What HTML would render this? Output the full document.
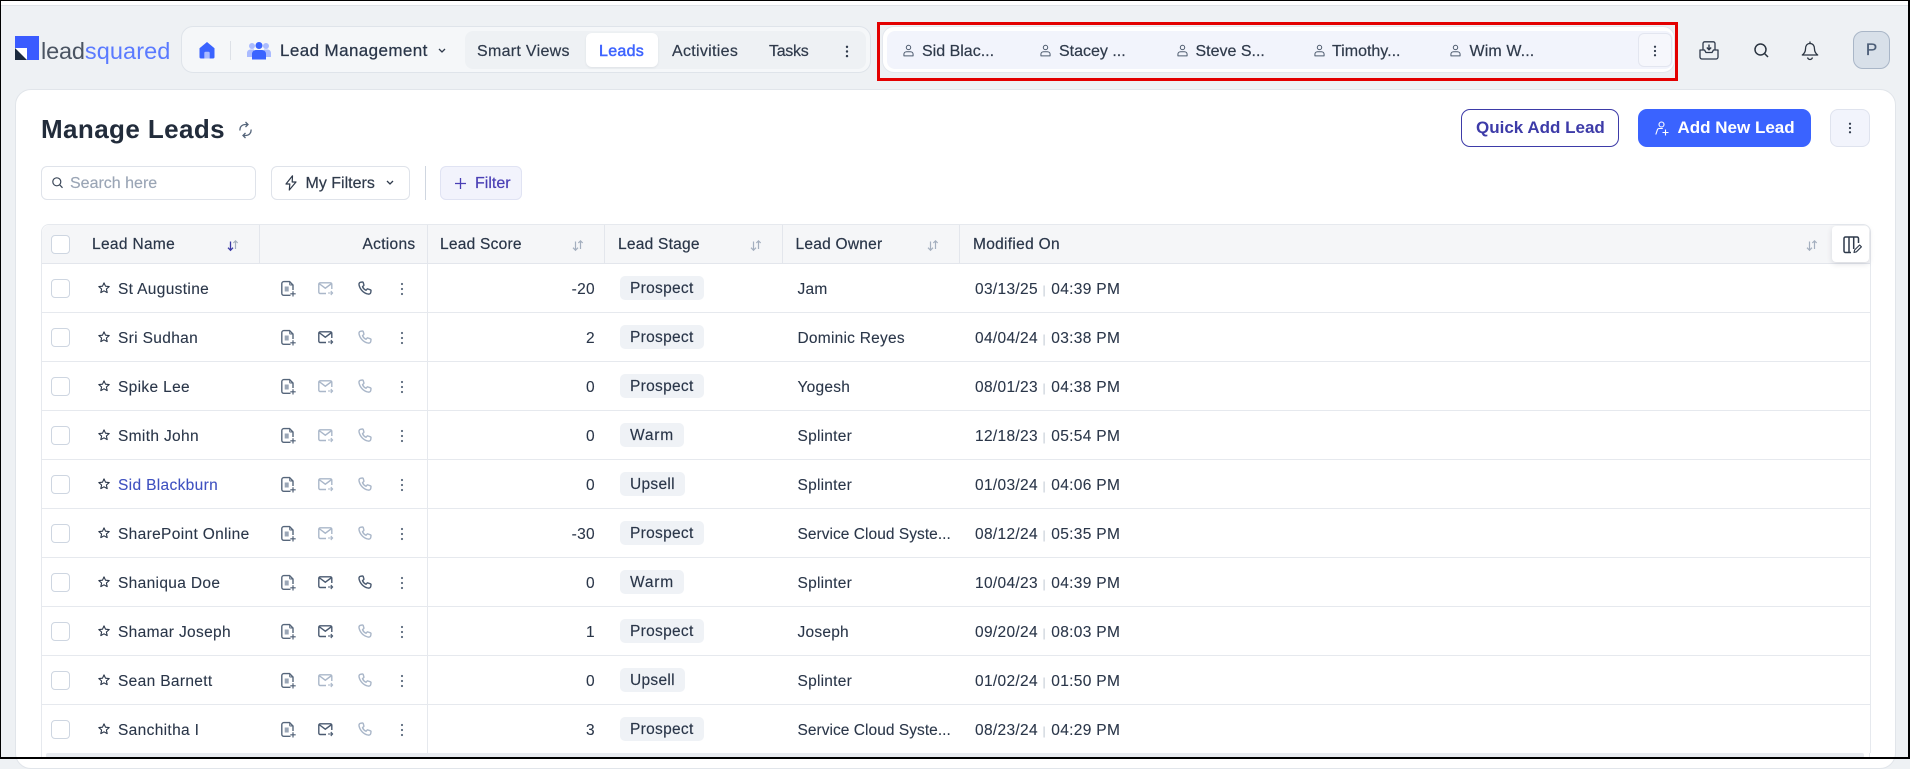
<!DOCTYPE html>
<html><head><meta charset="utf-8"><title>Manage Leads</title>
<style>
*{box-sizing:border-box;margin:0;padding:0}
html,body{width:1910px;height:759px;overflow:hidden;background:#eef1f4;font-family:"Liberation Sans",sans-serif;color:#2a3649}
.a{position:absolute}
.t{position:absolute;white-space:nowrap;line-height:20px;font-size:15.5px;letter-spacing:.34px}
.m{-webkit-text-stroke:.25px currentColor}
.n{font-size:16px;letter-spacing:.3px;-webkit-text-stroke:.2px currentColor;color:#2f3a4b}
.h{top:235px;letter-spacing:.25px;-webkit-text-stroke:.2px currentColor}
.vl{position:absolute;top:225px;height:38px;width:1px;background:#e3e6ec}
.r{position:absolute;left:41px;width:1829px;height:49px;border-bottom:1.5px solid #e6e9ee}
.r>*{position:absolute}
.cb{width:19px;height:19px;border:1.3px solid #ced6e1;border-radius:4px;background:#fff}
.r .cb{left:10px;top:15px}
.r .t{top:15.6px;-webkit-text-stroke:.1px currentColor}
.r .chip{left:579px;top:12px;height:24px;line-height:26px;padding:0 10px;background:#eff2f6;border-radius:5px;letter-spacing:.3px;-webkit-text-stroke:.15px currentColor}
.r .o{left:756.500px;letter-spacing:.24px}
.r .dt{left:934px;letter-spacing:.32px}
.bar{color:#c5ccd6;font-size:12px;letter-spacing:1px}
svg{position:absolute;overflow:visible;fill:none}
.s{left:57px;top:18px}
.i1{left:240px;top:17px}.i2{left:277px;top:18px}.i3{left:317px;top:17px}.i4{left:359px;top:18px}
.so{top:240px}
</style></head>
<body>
<svg width="0" height="0" style="position:absolute">
<defs>
<symbol id="star" viewBox="0 0 12 12" overflow="visible"><path d="M6 .9l1.5 3.3 3.7.4-2.8 2.4.8 3.6L6 8.8l-3.2 1.8.8-3.6L.8 4.6l3.7-.4z" fill="none" stroke="#2a3649" stroke-width="1.1" stroke-linejoin="round"/></symbol>
<symbol id="note" viewBox="0 0 16 16" overflow="visible"><path d="M9.500 14.300H2.800A2 2 0 0 1 .8 12.300V2.600A2 2 0 0 1 2.800.6h5.800l3.400 3.400V9" fill="none" stroke="#56667b" stroke-width="1.400"/><path d="M8.700.8v2.600a.6.6 0 0 0 .6.6h2.500" fill="none" stroke="#56667b" stroke-width="1"/><path d="M3.700 5.500h4v5h-4z" fill="#9aa6b6"/><path d="M12 10.200v5.300M9.300 12.800h5.400" stroke="#4f5f75" stroke-width="1.200" fill="none"/></symbol>
<symbol id="mail" viewBox="0 0 15 13" overflow="visible"><path d="M8 11.500H2.200A1.400 1.400 0 0 1 .8 10.100V2.200A1.400 1.400 0 0 1 2.200.8h10.200a1.400 1.400 0 0 1 1.400 1.400V7" fill="none" stroke="currentColor" stroke-width="1.400"/><path d="M1 1.500l6.300 4.700 6.400-4.700" fill="none" stroke="currentColor" stroke-width="1.400"/><path d="M10 11h4.500M12.800 9l1.800 2-1.800 2" fill="none" stroke="currentColor" stroke-width="1.100"/></symbol>
<symbol id="phone" viewBox="0 0 14 14" overflow="visible"><path d="M4.300 1 2.400 1.300C1.200 1.700.8 2.900 1.100 4.200c1 4.300 4.400 7.800 8.700 8.800 1.300.3 2.500-.1 2.900-1.300l.3-1.800c.1-.5-.1-.9-.6-1.100L10.100 8c-.4-.2-.9-.1-1.200.3l-.9 1c-1.700-.8-2.800-2-3.500-3.600l1-.9c.4-.3.5-.8.3-1.200L5.200 1.500C5 1.100 4.700.9 4.300 1z" fill="none" stroke="currentColor" stroke-width="1.400" stroke-linejoin="round"/></symbol>
<symbol id="dots" viewBox="0 0 4 14" overflow="visible"><circle cx="2" cy="2" r="1.100" fill="#5d6b7e"/><circle cx="2" cy="7" r="1.100" fill="#5d6b7e"/><circle cx="2" cy="12" r="1.100" fill="#5d6b7e"/></symbol>
<symbol id="dotsd" viewBox="0 0 4 14" overflow="visible"><circle cx="2" cy="2" r="1.300" fill="#2f3a4b"/><circle cx="2" cy="7" r="1.300" fill="#2f3a4b"/><circle cx="2" cy="12" r="1.300" fill="#2f3a4b"/></symbol>
<symbol id="sort" viewBox="0 0 12 11" overflow="visible"><path d="M3.500 1.500v8.500M1 7.700l2.500 2.600L6 7.700" fill="none" stroke="#a4afbf" stroke-width="1.200"/><path d="M8.500 9V.8M6.300 3l2.200-2.200L10.700 3" fill="none" stroke="#a4afbf" stroke-width="1.200"/></symbol>
<symbol id="sorta" viewBox="0 0 12 11" overflow="visible"><path d="M3.500 1.500v8.500M1 7.700l2.500 2.600L6 7.700" fill="none" stroke="#3b3aa5" stroke-width="1.300"/><path d="M8.500 9V.8M6.300 3l2.200-2.200L10.700 3" fill="none" stroke="#a4afbf" stroke-width="1.200"/></symbol>
<symbol id="user" viewBox="0 0 12 13" overflow="visible"><circle cx="6" cy="3.200" r="2.400" fill="none" stroke="#4f5c6f" stroke-width="1.100"/><path d="M1 12.300V10.500C1 8.800 2.300 7.800 4 7.800h4c1.700 0 3 1 3 2.700v1.800z" fill="none" stroke="#4f5c6f" stroke-width="1.100" stroke-linejoin="round"/></symbol>
</defs>
</svg>

<div class="a" style="left:0;top:0;width:1910px;height:6px;background:#fff;border-bottom:1px solid #dfe3e8"></div>

<!-- logo -->
<div class="a" style="left:15px;top:36px;width:23.500px;height:24px;background:#3a5bff"></div>
<svg style="left:15px;top:48px" width="12" height="12"><rect width="12" height="12" fill="#fff"/><path d="M0 0 12 12H0z" fill="#1b2a3d"/></svg>
<div class="t" style="left:41px;top:37px;font-size:23.500px;line-height:28px;letter-spacing:-.15px;color:#4a5462">lead<span style="color:#5a7aff;letter-spacing:.1px">squared</span></div>

<!-- nav pill -->
<div class="a" style="left:181px;top:26px;width:690px;height:47px;background:#f5f7f9;border:1.500px solid #dfe4ea;border-radius:12px"></div>
<svg style="left:199px;top:42px" width="16" height="17"><path d="M8 0 15.500 6.300V15a1.500 1.500 0 0 1-1.500 1.500H2A1.500 1.500 0 0 1 .5 15V6.300z" fill="#3a63ff"/><path d="M5.300 16.500v-5.500a1.200 1.200 0 0 1 1.200-1.200h3a1.200 1.200 0 0 1 1.200 1.200v5.500z" fill="#aabbff"/></svg>
<div class="a" style="left:230px;top:41px;width:1px;height:19px;background:#dde1e7"></div>
<svg style="left:247px;top:42px" width="24" height="18"><circle cx="5" cy="4" r="3" fill="#aabbff"/><circle cx="19" cy="4" r="3" fill="#aabbff"/><path d="M0 15V11c0-2 1.500-3.500 3.500-3.500H7V15zM24 15V11c0-2-1.500-3.500-3.500-3.500H17V15z" fill="#aabbff"/><circle cx="12" cy="3.500" r="3.500" fill="#3a63ff"/><path d="M5 17.500V12c0-2.300 1.800-4 4-4h6c2.200 0 4 1.700 4 4v5.500z" fill="#3a63ff"/></svg>
<div class="t m" style="left:280px;top:41px;font-size:17px;letter-spacing:.4px">Lead Management</div>
<svg style="left:438px;top:48px" width="8" height="6"><path d="M1 1l3 3 3-3" stroke="#2f3a4b" stroke-width="1.300"/></svg>
<div class="a" style="left:465px;top:31px;width:401px;height:38px;background:#eef1f4;border-radius:8px"></div>
<div class="a" style="left:586px;top:33px;width:72px;height:34px;background:#fff;border-radius:6px;box-shadow:0 1px 2px rgba(40,50,70,.08)"></div>
<div class="t n" style="left:477px;top:42px">Smart Views</div>
<div class="t n" style="left:599px;top:42px;color:#3e64ff;-webkit-text-stroke:.5px #3e64ff">Leads</div>
<div class="t n" style="left:672px;top:42px">Activities</div>
<div class="t n" style="left:769px;top:42px;letter-spacing:-.3px">Tasks</div>
<svg style="left:845px;top:45px" width="4" height="13"><use href="#dotsd" width="4" height="13"/></svg>

<!-- red box -->
<div class="a" style="left:882px;top:26px;width:793px;height:47px;background:#fff;border:1.500px solid #e4e8ee;border-radius:12px"></div>
<div class="a" style="left:887px;top:31px;width:786px;height:38px;background:#f2f4fc;border-radius:8px"></div>
<svg style="left:903px;top:44px" width="11" height="13"><use href="#user" width="11" height="13"/></svg>
<div class="t n" style="left:922px;top:42px;letter-spacing:0">Sid Blac...</div>
<svg style="left:1040px;top:44px" width="11" height="13"><use href="#user" width="11" height="13"/></svg>
<div class="t n" style="left:1059px;top:42px;letter-spacing:0">Stacey ...</div>
<svg style="left:1177px;top:44px" width="11" height="13"><use href="#user" width="11" height="13"/></svg>
<div class="t n" style="left:1195.500px;top:42px;letter-spacing:0">Steve S...</div>
<svg style="left:1314px;top:44px" width="11" height="13"><use href="#user" width="11" height="13"/></svg>
<div class="t n" style="left:1332px;top:42px;letter-spacing:0">Timothy...</div>
<svg style="left:1450px;top:44px" width="11" height="13"><use href="#user" width="11" height="13"/></svg>
<div class="t n" style="left:1469.500px;top:42px;letter-spacing:.1px">Wim W...</div>
<div class="a" style="left:1638px;top:33px;width:34px;height:34px;background:#f6f7fc;border:1px solid #e3e6f0;border-radius:6px"></div>
<svg style="left:1652.500px;top:45px" width="4" height="12"><use href="#dotsd" width="4" height="12"/></svg>
<div class="a" style="left:877px;top:22px;width:801px;height:59px;border:3px solid #e30000"></div>

<!-- right icons -->
<svg style="left:1699px;top:41px" width="20" height="19"><path d="M4 8.500V2.500A1.700 1.700 0 0 1 5.700.8h8.600A1.700 1.700 0 0 1 16 2.500v6" stroke="#2f3a4b" stroke-width="1.300"/><path d="M1 9h4.500l1.500 2.500h6L14.500 9H19v7a2 2 0 0 1-2 2H3a2 2 0 0 1-2-2z" stroke="#2f3a4b" stroke-width="1.300" stroke-linejoin="round"/><path d="M10 3.500v5M7.800 6.500 10 8.700l2.200-2.200" stroke="#2f3a4b" stroke-width="1.400"/></svg>
<svg style="left:1754px;top:43px" width="15" height="15"><circle cx="6.500" cy="6.500" r="5.500" stroke="#2a3440" stroke-width="1.500"/><path d="M10.500 10.500l3.500 3.500" stroke="#2a3440" stroke-width="1.500"/></svg>
<svg style="left:1801px;top:41px" width="18" height="19"><path d="M9 2.500C5.800 2.500 4.500 5 4.500 8c0 2.500-1.200 4.500-3.200 6h15.400c-2-1.500-3.200-3.500-3.200-6 0-3-1.300-5.500-4.500-5.500z" stroke="#2a3440" stroke-width="1.300" stroke-linejoin="round"/><path d="M9 .5v2M6.500 16.500c.5 1.300 1.300 2 2.500 2s2-.7 2.500-2" stroke="#2a3440" stroke-width="1.300"/></svg>
<div class="a" style="left:1853px;top:31px;width:37px;height:38px;background:#d8e0e9;border:1.300px solid #a9b6c7;border-radius:10px;text-align:center;line-height:36px;font-size:17px;color:#4a5c76;-webkit-text-stroke:.25px #4a5c76">P</div>

<!-- main card -->
<div class="a" style="left:15px;top:89px;width:1881px;height:680px;background:#fff;border:1.500px solid #e1e5ea;border-radius:16px"></div>
<div class="t" style="left:41px;top:115px;font-size:26px;line-height:28px;letter-spacing:.4px;font-weight:bold;color:#222c3b">Manage Leads</div>
<svg style="left:238px;top:121px" width="15" height="18"><path d="M2 9.500C1.500 6 4 3.500 7.500 3.500h2M7.500 1l2.500 2.500L7.500 6M13 8.500c.5 3.500-2 6-5.500 6h-2M7.500 17 5 14.500 7.500 12" stroke="#55657a" stroke-width="1.300"/></svg>

<div class="a" style="left:40.500px;top:166px;width:215px;height:34px;background:#fff;border:1.300px solid #dfe3ea;border-radius:6px"></div>
<svg style="left:52px;top:177px" width="11" height="12"><circle cx="4.800" cy="4.800" r="4" stroke="#3c4859" stroke-width="1.200"/><path d="M7.700 7.800l2.800 3" stroke="#3c4859" stroke-width="1.200"/></svg>
<div class="t" style="left:70px;top:174px;font-size:16px;letter-spacing:0;color:#9aa5b5;-webkit-text-stroke:.15px #9aa5b5">Search here</div>
<div class="a" style="left:271px;top:166px;width:139px;height:34px;background:#fff;border:1.300px solid #dfe3ea;border-radius:6px"></div>
<svg style="left:285px;top:175px" width="12" height="16"><path d="M7.500.8 1 9h3.800L4.300 15 11 7H7.200z" stroke="#2f3a4b" stroke-width="1.200" stroke-linejoin="round"/></svg>
<div class="t n" style="left:305.500px;top:174px;letter-spacing:0">My Filters</div>
<svg style="left:386px;top:180px" width="8" height="6"><path d="M1 1l3 3 3-3" stroke="#2f3a4b" stroke-width="1.300"/></svg>
<div class="a" style="left:424.500px;top:166px;width:1.500px;height:34px;background:#cfd6e0"></div>
<div class="a" style="left:440px;top:166px;width:82px;height:34px;background:#f2f3fc;border:1.300px solid #e0e3f3;border-radius:6px"></div>
<svg style="left:454.500px;top:177.500px" width="11" height="11"><path d="M5.500 0v11M0 5.500h11" stroke="#4a3fb5" stroke-width="1.300"/></svg>
<div class="t n" style="left:475px;top:174px;letter-spacing:0;color:#4a3fb5">Filter</div>

<div class="a" style="left:1461px;top:109px;width:158px;height:38px;background:#fff;border:1.500px solid #3d3ba8;border-radius:9px"></div>
<div class="t" style="left:1476px;top:118px;font-size:17px;font-weight:bold;letter-spacing:0;color:#3d3ba8">Quick Add Lead</div>
<div class="a" style="left:1638px;top:109px;width:173px;height:38px;background:#3a63ff;border-radius:9px"></div>
<svg style="left:1655px;top:121px" width="14" height="15"><circle cx="6.500" cy="3.500" r="2.500" stroke="#fff" stroke-width="1.100"/><path d="M.8 13.500 2.500 8.500c.3-.8 1-1 1.700-1h3.600M10.500 8.500v6M7.500 11.500h6" stroke="#fff" stroke-width="1.100"/></svg>
<div class="t" style="left:1677.500px;top:118px;font-size:17px;font-weight:bold;letter-spacing:0;color:#fff">Add New Lead</div>
<div class="a" style="left:1830px;top:109px;width:40px;height:38px;background:#f2f4fc;border:1.300px solid #dfe3ee;border-radius:8px"></div>
<svg style="left:1848px;top:122px" width="4" height="12"><use href="#dotsd" width="4" height="12"/></svg>

<!-- table -->
<div class="a" style="left:40.500px;top:224px;width:1830px;height:529px;background:#fff;border:1.300px solid #e6e9ee;border-bottom:0;border-radius:8px 8px 0 0"></div>
<div class="a" style="left:41.500px;top:225px;width:1828px;height:38.500px;background:#f5f6f8;border-bottom:1.500px solid #e3e6ec;border-radius:8px 8px 0 0"></div>
<div class="vl" style="left:259px"></div><div class="vl" style="left:427px"></div><div class="vl" style="left:604px"></div><div class="vl" style="left:782px"></div><div class="vl" style="left:959px"></div>
<div class="a" style="left:427px;top:264px;width:1px;height:489px;background:#e6e9ee"></div>
<div class="cb a" style="left:51px;top:235px"></div>
<div class="t h" style="left:92px;letter-spacing:.33px">Lead Name</div><svg class="so" style="left:226.500px" width="12" height="11"><use href="#sorta" width="12" height="11"/></svg>
<div class="t h" style="left:362.500px;letter-spacing:.3px">Actions</div>
<div class="t h" style="left:440px">Lead Score</div><svg class="so" style="left:572px" width="12" height="11"><use href="#sort" width="12" height="11"/></svg>
<div class="t h" style="left:618px">Lead Stage</div><svg class="so" style="left:749.500px" width="12" height="11"><use href="#sort" width="12" height="11"/></svg>
<div class="t h" style="left:795.500px">Lead Owner</div><svg class="so" style="left:927px" width="12" height="11"><use href="#sort" width="12" height="11"/></svg>
<div class="t h" style="left:973px;letter-spacing:.3px">Modified On</div><svg class="so" style="left:1806px" width="12" height="11"><use href="#sort" width="12" height="11"/></svg>

<!-- rows -->
<div class="r" style="top:264px"><div class="cb"></div><svg class="s" width="12" height="12"><use href="#star" width="12" height="12"/></svg><div class="t" style="left:77px">St Augustine</div><svg class="i1" width="16" height="16"><use href="#note" width="16" height="16"/></svg><svg class="i2" style="color:#aab7c9" width="15" height="13"><use href="#mail" width="15" height="13"/></svg><svg class="i3" style="color:#4a5a70" width="14" height="14"><use href="#phone" width="14" height="14"/></svg><svg class="i4" width="4" height="14"><use href="#dots" width="4" height="14"/></svg><div class="t" style="left:450px;width:104px;text-align:right">-20</div><div class="t chip">Prospect</div><div class="t o">Jam</div><div class="t dt">03/13/25 <span class="bar">|</span> 04:39 PM</div></div>
<div class="r" style="top:313px"><div class="cb"></div><svg class="s" width="12" height="12"><use href="#star" width="12" height="12"/></svg><div class="t" style="left:77px">Sri Sudhan</div><svg class="i1" width="16" height="16"><use href="#note" width="16" height="16"/></svg><svg class="i2" style="color:#4a5a70" width="15" height="13"><use href="#mail" width="15" height="13"/></svg><svg class="i3" style="color:#aab7c9" width="14" height="14"><use href="#phone" width="14" height="14"/></svg><svg class="i4" width="4" height="14"><use href="#dots" width="4" height="14"/></svg><div class="t" style="left:450px;width:104px;text-align:right">2</div><div class="t chip">Prospect</div><div class="t o">Dominic Reyes</div><div class="t dt">04/04/24 <span class="bar">|</span> 03:38 PM</div></div>
<div class="r" style="top:362px"><div class="cb"></div><svg class="s" width="12" height="12"><use href="#star" width="12" height="12"/></svg><div class="t" style="left:77px">Spike Lee</div><svg class="i1" width="16" height="16"><use href="#note" width="16" height="16"/></svg><svg class="i2" style="color:#aab7c9" width="15" height="13"><use href="#mail" width="15" height="13"/></svg><svg class="i3" style="color:#aab7c9" width="14" height="14"><use href="#phone" width="14" height="14"/></svg><svg class="i4" width="4" height="14"><use href="#dots" width="4" height="14"/></svg><div class="t" style="left:450px;width:104px;text-align:right">0</div><div class="t chip">Prospect</div><div class="t o">Yogesh</div><div class="t dt">08/01/23 <span class="bar">|</span> 04:38 PM</div></div>
<div class="r" style="top:411px"><div class="cb"></div><svg class="s" width="12" height="12"><use href="#star" width="12" height="12"/></svg><div class="t" style="left:77px">Smith John</div><svg class="i1" width="16" height="16"><use href="#note" width="16" height="16"/></svg><svg class="i2" style="color:#aab7c9" width="15" height="13"><use href="#mail" width="15" height="13"/></svg><svg class="i3" style="color:#aab7c9" width="14" height="14"><use href="#phone" width="14" height="14"/></svg><svg class="i4" width="4" height="14"><use href="#dots" width="4" height="14"/></svg><div class="t" style="left:450px;width:104px;text-align:right">0</div><div class="t chip" style="letter-spacing:.8px">Warm</div><div class="t o">Splinter</div><div class="t dt">12/18/23 <span class="bar">|</span> 05:54 PM</div></div>
<div class="r" style="top:460px"><div class="cb"></div><svg class="s" width="12" height="12"><use href="#star" width="12" height="12"/></svg><div class="t" style="left:77px;color:#3f51c0">Sid Blackburn</div><svg class="i1" width="16" height="16"><use href="#note" width="16" height="16"/></svg><svg class="i2" style="color:#aab7c9" width="15" height="13"><use href="#mail" width="15" height="13"/></svg><svg class="i3" style="color:#aab7c9" width="14" height="14"><use href="#phone" width="14" height="14"/></svg><svg class="i4" width="4" height="14"><use href="#dots" width="4" height="14"/></svg><div class="t" style="left:450px;width:104px;text-align:right">0</div><div class="t chip">Upsell</div><div class="t o">Splinter</div><div class="t dt">01/03/24 <span class="bar">|</span> 04:06 PM</div></div>
<div class="r" style="top:509px"><div class="cb"></div><svg class="s" width="12" height="12"><use href="#star" width="12" height="12"/></svg><div class="t" style="left:77px">SharePoint Online</div><svg class="i1" width="16" height="16"><use href="#note" width="16" height="16"/></svg><svg class="i2" style="color:#aab7c9" width="15" height="13"><use href="#mail" width="15" height="13"/></svg><svg class="i3" style="color:#aab7c9" width="14" height="14"><use href="#phone" width="14" height="14"/></svg><svg class="i4" width="4" height="14"><use href="#dots" width="4" height="14"/></svg><div class="t" style="left:450px;width:104px;text-align:right">-30</div><div class="t chip">Prospect</div><div class="t o" style="letter-spacing:.04px">Service Cloud Syste...</div><div class="t dt">08/12/24 <span class="bar">|</span> 05:35 PM</div></div>
<div class="r" style="top:558px"><div class="cb"></div><svg class="s" width="12" height="12"><use href="#star" width="12" height="12"/></svg><div class="t" style="left:77px">Shaniqua Doe</div><svg class="i1" width="16" height="16"><use href="#note" width="16" height="16"/></svg><svg class="i2" style="color:#4a5a70" width="15" height="13"><use href="#mail" width="15" height="13"/></svg><svg class="i3" style="color:#4a5a70" width="14" height="14"><use href="#phone" width="14" height="14"/></svg><svg class="i4" width="4" height="14"><use href="#dots" width="4" height="14"/></svg><div class="t" style="left:450px;width:104px;text-align:right">0</div><div class="t chip" style="letter-spacing:.8px">Warm</div><div class="t o">Splinter</div><div class="t dt">10/04/23 <span class="bar">|</span> 04:39 PM</div></div>
<div class="r" style="top:607px"><div class="cb"></div><svg class="s" width="12" height="12"><use href="#star" width="12" height="12"/></svg><div class="t" style="left:77px">Shamar Joseph</div><svg class="i1" width="16" height="16"><use href="#note" width="16" height="16"/></svg><svg class="i2" style="color:#4a5a70" width="15" height="13"><use href="#mail" width="15" height="13"/></svg><svg class="i3" style="color:#aab7c9" width="14" height="14"><use href="#phone" width="14" height="14"/></svg><svg class="i4" width="4" height="14"><use href="#dots" width="4" height="14"/></svg><div class="t" style="left:450px;width:104px;text-align:right">1</div><div class="t chip">Prospect</div><div class="t o">Joseph</div><div class="t dt">09/20/24 <span class="bar">|</span> 08:03 PM</div></div>
<div class="r" style="top:656px"><div class="cb"></div><svg class="s" width="12" height="12"><use href="#star" width="12" height="12"/></svg><div class="t" style="left:77px">Sean Barnett</div><svg class="i1" width="16" height="16"><use href="#note" width="16" height="16"/></svg><svg class="i2" style="color:#aab7c9" width="15" height="13"><use href="#mail" width="15" height="13"/></svg><svg class="i3" style="color:#aab7c9" width="14" height="14"><use href="#phone" width="14" height="14"/></svg><svg class="i4" width="4" height="14"><use href="#dots" width="4" height="14"/></svg><div class="t" style="left:450px;width:104px;text-align:right">0</div><div class="t chip">Upsell</div><div class="t o">Splinter</div><div class="t dt">01/02/24 <span class="bar">|</span> 01:50 PM</div></div>
<div class="r" style="top:705px;border-bottom:0;height:48px"><div class="cb"></div><svg class="s" width="12" height="12"><use href="#star" width="12" height="12"/></svg><div class="t" style="left:77px">Sanchitha I</div><svg class="i1" width="16" height="16"><use href="#note" width="16" height="16"/></svg><svg class="i2" style="color:#4a5a70" width="15" height="13"><use href="#mail" width="15" height="13"/></svg><svg class="i3" style="color:#aab7c9" width="14" height="14"><use href="#phone" width="14" height="14"/></svg><svg class="i4" width="4" height="14"><use href="#dots" width="4" height="14"/></svg><div class="t" style="left:450px;width:104px;text-align:right">3</div><div class="t chip">Prospect</div><div class="t o" style="letter-spacing:.04px">Service Cloud Syste...</div><div class="t dt">08/23/24 <span class="bar">|</span> 04:29 PM</div></div>

<div class="a" style="left:46px;top:753px;width:1818px;height:5px;background:#e8ebf0;border-radius:2px"></div>
<div class="a" style="left:40.500px;top:753px;width:1.300px;height:6px;background:#e6e9ee"></div>
<div class="a" style="left:1869px;top:753px;width:1.300px;height:6px;background:#e6e9ee"></div>

<!-- column edit -->
<div class="a" style="left:1832px;top:226px;width:37px;height:36px;background:#fff;border-radius:4px;box-shadow:0 2px 6px rgba(40,50,70,.14)"></div>
<svg style="left:1843px;top:236px" width="19" height="18"><path d="M8 16.500H2.500A1.500 1.500 0 0 1 1 15V2.500A1.500 1.500 0 0 1 2.500 1h11.500A1.500 1.500 0 0 1 15.500 2.500V7M6 1v15.500M10.700 1v12" stroke="#2f3a4b" stroke-width="1.500"/><path d="M11 16.500l.6-2.500 5-5 1.800 1.800-5 5z" stroke="#2f3a4b" stroke-width="1.100" stroke-linejoin="round"/></svg>

<!-- screenshot frame -->
<div class="a" style="left:0;top:0;width:1910px;height:759px;border-style:solid;border-color:#000;border-width:1px 2px 2px 1px;pointer-events:none"></div>
</body></html>
